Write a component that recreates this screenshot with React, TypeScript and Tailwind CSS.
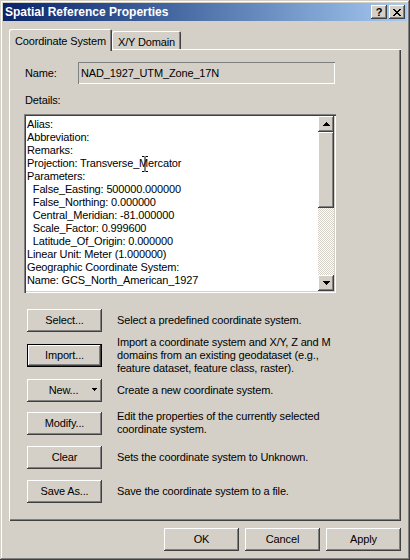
import React from "react";

// classic 3D bevels
const raised =
  "bg-[#d4d0c8] shadow-[inset_-1px_-1px_#404040,inset_1px_1px_#fff,inset_-2px_-2px_#808080,inset_2px_2px_#d4d0c8]";

const details = [
  "Alias:",
  "Abbreviation:",
  "Remarks:",
  "Projection: Transverse_Mercator",
  "Parameters:",
  "  False_Easting: 500000.000000",
  "  False_Northing: 0.000000",
  "  Central_Meridian: -81.000000",
  "  Scale_Factor: 0.999600",
  "  Latitude_Of_Origin: 0.000000",
  "Linear Unit: Meter (1.000000)",
  "Geographic Coordinate System:",
  "Name: GCS_North_American_1927",
];

const Btn = ({
  label,
  isDefault = false,
  arrow = false,
}: {
  label: string;
  isDefault?: boolean;
  arrow?: boolean;
}) => (
  <div className={`w-[75px] h-[23px] shrink-0 ${isDefault ? "border border-black" : ""}`}>
    <div className={`relative w-full h-full flex items-center justify-center ${raised}`}>
      <span className={arrow ? "-ml-[2px]" : ""}>{label}</span>
      {arrow && (
        <svg className="absolute right-[5px] top-[9px]" width="5" height="3" viewBox="0 0 5 3">
          <path d="M0 0h5v1H4v1H3v1H2V2H1V1H0z" fill="#000" />
        </svg>
      )}
    </div>
  </div>
);

const ActionRow = ({
  label,
  lines,
  mt,
  isDefault,
  arrow,
}: {
  label: string;
  lines: string[];
  mt: string;
  isDefault?: boolean;
  arrow?: boolean;
}) => (
  <div className={`flex items-center ml-[3px] ${mt}`}>
    <Btn label={label} isDefault={isDefault} arrow={arrow} />
    <div className="ml-[15px] leading-[13px]">
      {lines.map((l) => (
        <div key={l}>{l}</div>
      ))}
    </div>
  </div>
);

export default function App() {
  return (
    <div className="w-[410px] h-[560px] bg-[#d4d0c8] p-[3px] flex flex-col font-['Liberation_Sans',Arial,sans-serif] text-[11px] tracking-[-0.15px] text-black shadow-[inset_-1px_-1px_#404040,inset_1px_1px_#d4d0c8,inset_-2px_-2px_#808080,inset_2px_2px_#fff] select-none">
      {/* title bar */}
      <div className="h-[18px] shrink-0 flex items-center pl-[2px] pr-[2px] bg-linear-to-r from-[#0a246a] to-[#a6caf0]">
        <span className="flex-1 text-white font-bold text-[12px] tracking-normal">Spatial Reference Properties</span>
        <div className={`w-[16px] h-[14px] flex items-center justify-center ${raised}`}>
          <span className="font-bold text-[11px] leading-none">?</span>
        </div>
        <div className={`ml-[2px] w-[16px] h-[14px] flex items-center justify-center ${raised}`}>
          <svg width="8" height="7" viewBox="0 0 8 7">
            <path d="M0 0h2v1h1v1h2V1h1V0h2v1H7v1H6v1H5v1h1v1h1v1h1v1H6V6H5V5H3v1H2v1H0V6h1V5h1V4h1V3H2V2H1V1H0z" fill="#000" />
          </svg>
        </div>
      </div>

      {/* tabs */}
      <div className="mt-[8px] h-[20px] flex items-end pl-[6px]">
        <div className="relative z-10 w-[103px] h-[22px] -mb-[2px] flex items-start justify-center pt-[4px] bg-[#d4d0c8] rounded-t-[2px] shadow-[inset_1px_1px_#fff,inset_-1px_0_#404040,inset_-2px_0_#808080]">
          Coordinate System
        </div>
        <div className="w-[69px] h-[18px] flex items-start justify-center pt-[3px] bg-[#d4d0c8] rounded-t-[2px] shadow-[inset_1px_1px_#fff,inset_-1px_0_#404040,inset_-2px_0_#808080]">
          X/Y Domain
        </div>
      </div>

      {/* panel */}
      <div className="ml-[6px] w-[392px] h-[472px] shrink-0 pl-[15px] pt-[13px] shadow-[inset_1px_1px_#fff,inset_-1px_-1px_#404040,inset_-2px_-2px_#808080]">
        <div className="flex items-center">
          <span className="ml-[1px] w-[53px]">Name:</span>
          <div className="w-[257px] h-[22px] flex items-center pl-[3px] shadow-[inset_1px_1px_#808080,inset_-1px_-1px_#fff]">
            NAD_1927_UTM_Zone_17N
          </div>
        </div>

        <div className="mt-[10px] ml-[1px] leading-[13px]">Details:</div>

        <div className="mt-[7px] w-[312px] h-[179px] p-[2px] flex bg-white shadow-[inset_1px_1px_#808080,inset_2px_2px_#404040,inset_-1px_-1px_#fff,inset_-2px_-2px_#d4d0c8]">
          <div className="relative flex-1 overflow-hidden pl-[1px] pt-[2px] leading-[13px] whitespace-pre">
            {details.map((l) => (
              <div key={l}>{l}</div>
            ))}
            <svg className="absolute left-[116px] top-[40px]" width="6" height="16" viewBox="0 0 6 16">
              <path d="M0 .5h2.5M3.5.5H6M0 15.5h2.5M3.5 15.5H6M3 1v14" stroke="#000" strokeWidth="1" fill="none" />
            </svg>
          </div>
          <div className="w-[16px] flex flex-col">
            <div className={`h-[16px] flex items-center justify-center ${raised}`}>
              <svg width="7" height="4" viewBox="0 0 7 4">
                <path d="M3 0h1v1h1v1h1v1h1v1H0V3h1V2h1V1h1z" fill="#000" />
              </svg>
            </div>
            <div className={`h-[76px] ${raised}`} />
            <div className="flex-1 bg-[image:repeating-conic-gradient(#fff_0_25%,#d4d0c8_0_50%)] bg-[length:2px_2px]" />
            <div className={`h-[16px] flex items-center justify-center ${raised}`}>
              <svg width="7" height="4" viewBox="0 0 7 4">
                <path d="M0 0h7v1H6v1H5v1H4v1H3V3H2V2H1V1H0z" fill="#000" />
              </svg>
            </div>
          </div>
        </div>

        <ActionRow label="Select..." lines={["Select a predefined coordinate system."]} mt="mt-[16px]" />
        <ActionRow
          label="Import..."
          isDefault
          lines={[
            "Import a coordinate system and X/Y, Z and M",
            "domains from an existing geodataset (e.g.,",
            "feature dataset, feature class, raster).",
          ]}
          mt="mt-[4px]"
        />
        <ActionRow label="New..." arrow lines={["Create a new coordinate system."]} mt="mt-[4px]" />
        <ActionRow
          label="Modify..."
          lines={["Edit the properties of the currently selected", "coordinate system."]}
          mt="mt-[8px]"
        />
        <ActionRow label="Clear" lines={["Sets the coordinate system to Unknown."]} mt="mt-[10px]" />
        <ActionRow label="Save As..." lines={["Save the coordinate system to a file."]} mt="mt-[11px]" />
      </div>

      {/* dialog buttons */}
      <div className="mt-[7px] mr-[6px] flex justify-end gap-[6px]">
        <Btn label="OK" />
        <Btn label="Cancel" />
        <Btn label="Apply" />
      </div>
    </div>
  );
}
